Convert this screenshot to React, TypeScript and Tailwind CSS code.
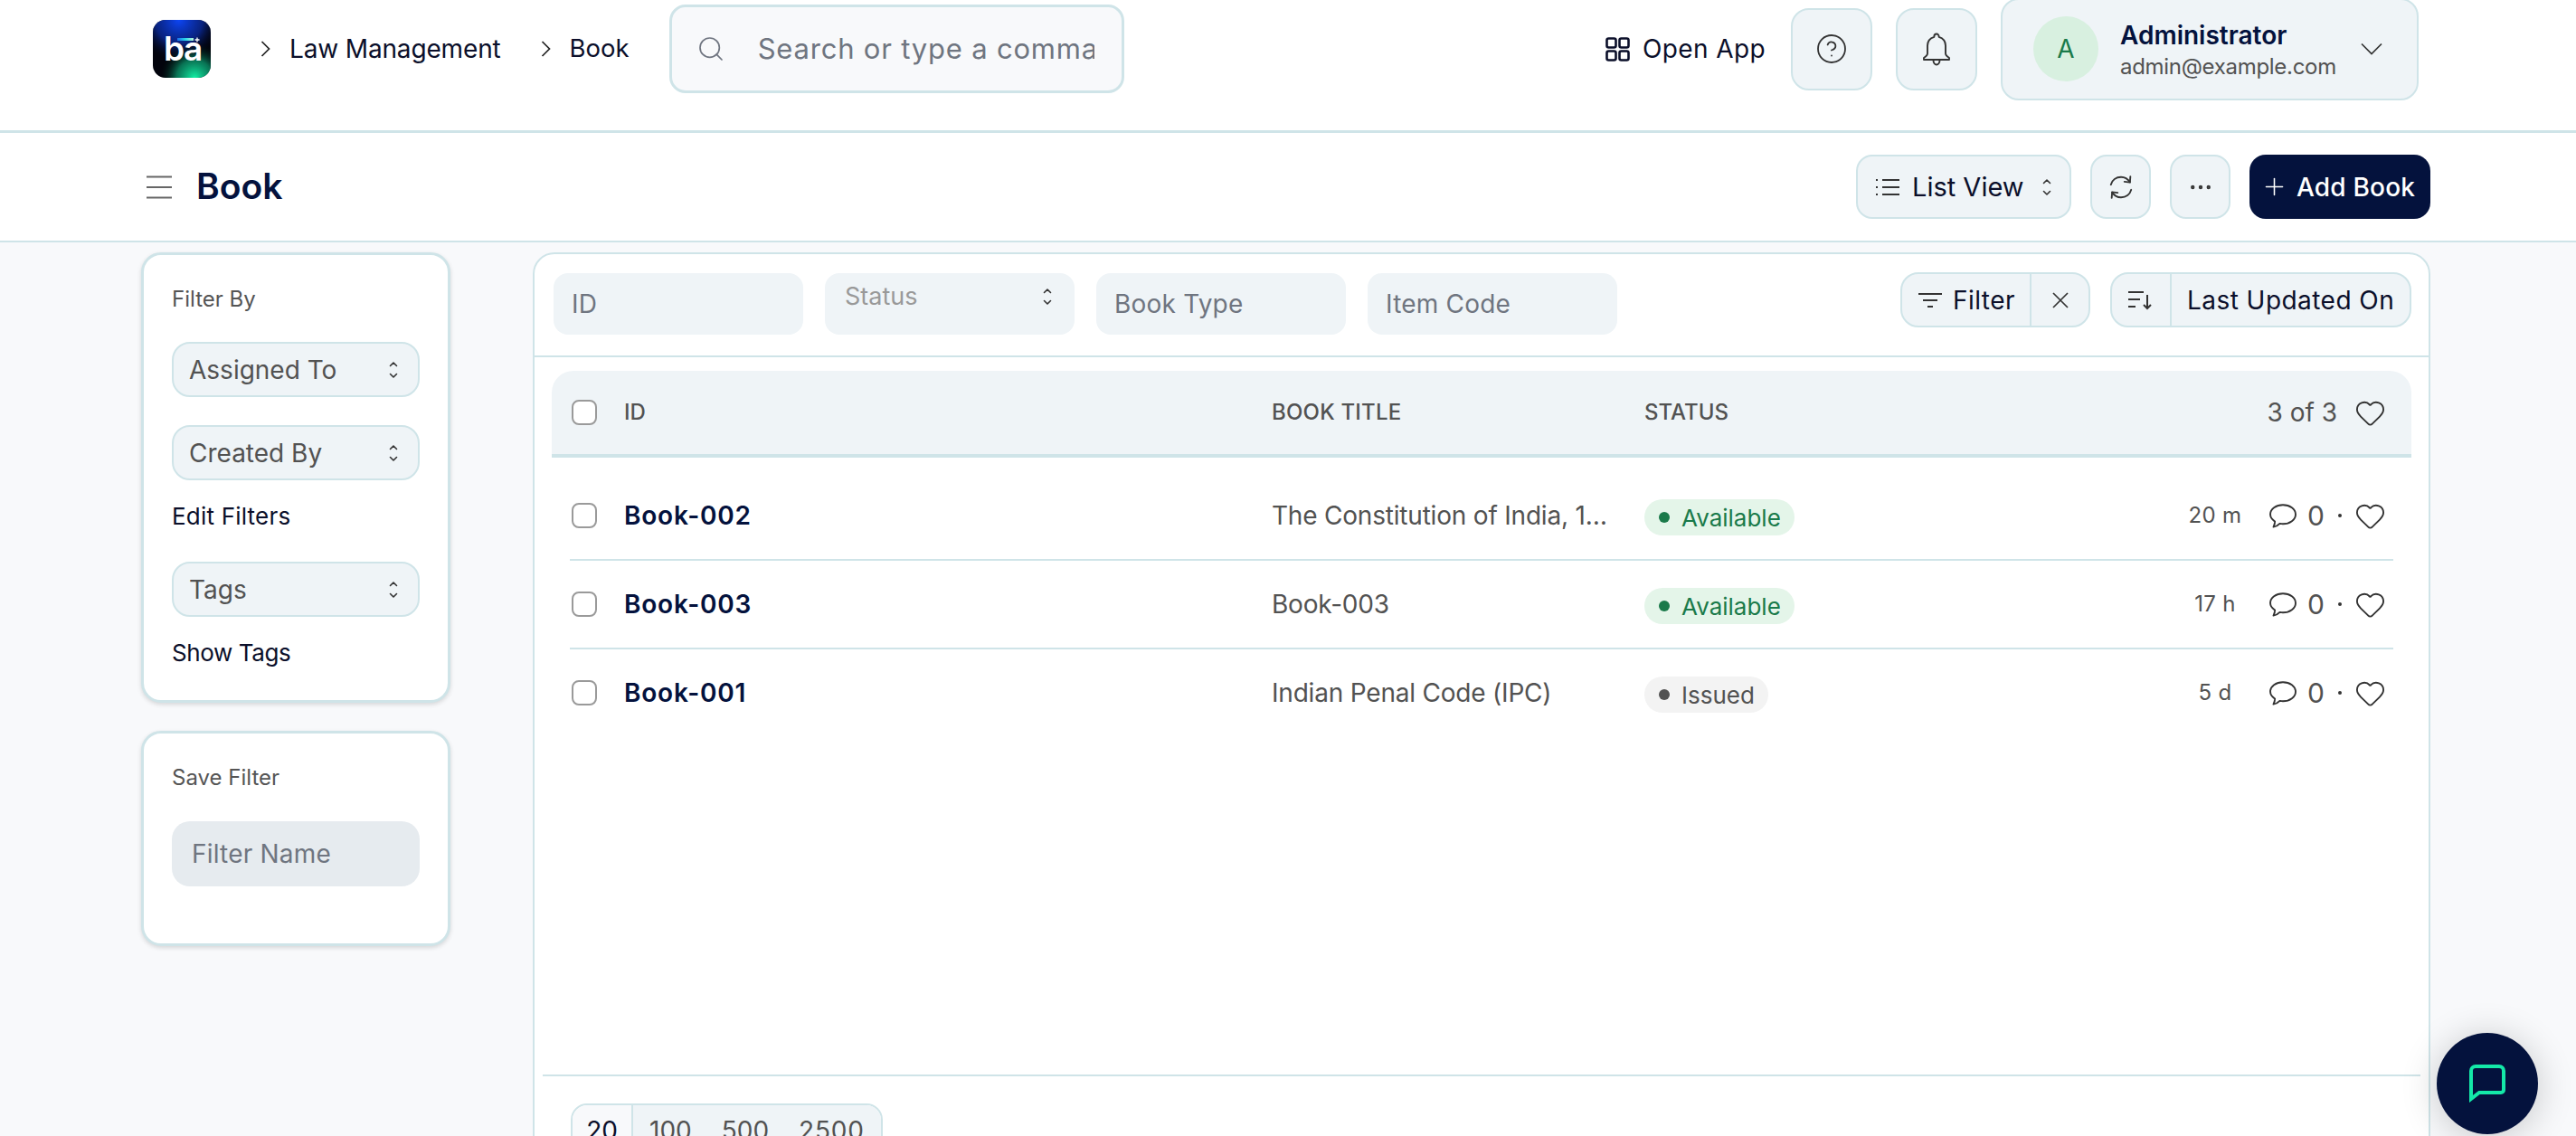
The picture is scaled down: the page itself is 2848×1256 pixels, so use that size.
import React from "react";
import { Search, Heart, CircleHelp, MoreHorizontal, Plus } from "lucide-react";

const UpDown = ({ className = "" }: { className?: string }) => (
  <svg viewBox="0 0 10 20" className={`w-[10px] h-[20px] ${className}`} fill="none" stroke="#333" strokeWidth="1.6" strokeLinecap="round" strokeLinejoin="round">
    <path d="M1.5 5.500 5 2l3.500 3.500" />
    <path d="M1.500 14.500 5 18l3.500-3.500" />
  </svg>
);

const Crumb = ({ className = "" }: { className?: string }) => (
  <svg viewBox="0 0 11 18" className={`w-[11px] h-[18px] ${className}`} fill="none" stroke="#222" strokeWidth="1.700">
    <path d="m1.500 1 8 8-8 8" />
  </svg>
);

const Comment = () => (
  <svg viewBox="0 0 30 27" className="w-[30px] h-[27px]" fill="none" stroke="#333" strokeWidth="1.9" strokeLinejoin="round">
    <path d="M15 1.200C7.300 1.200 1 5.900 1 11.600c0 3.200 2 6 5.100 8 0 2-.5 4-1.600 6 3-.4 5.600-2.200 7-3.700 1.100.2 2.300.4 3.500.4 7.700 0 14-4.700 14-10.600S22.700 1.200 15 1.200Z" />
  </svg>
);

const Logo = () => (
  <svg viewBox="0 0 64 64" className="w-[64px] h-[64px]">
    <defs>
      <radialGradient id="lb" cx="0.45" cy="0" r="0.75">
        <stop offset="0" stopColor="#0d45f5" />
        <stop offset="0.55" stopColor="#0a2a9a" stopOpacity="0.8" />
        <stop offset="1" stopColor="#000" stopOpacity="0" />
      </radialGradient>
      <radialGradient id="lg" cx="0.72" cy="1" r="0.62">
        <stop offset="0" stopColor="#12f0a5" />
        <stop offset="0.5" stopColor="#0a8f66" stopOpacity="0.8" />
        <stop offset="1" stopColor="#000" stopOpacity="0" />
      </radialGradient>
      <linearGradient id="lbar" x1="0" x2="1" y1="0" y2="0">
        <stop offset="0" stopColor="#1a6cf0" />
        <stop offset="0.5" stopColor="#27d8e8" />
        <stop offset="1" stopColor="#b8f5d8" />
      </linearGradient>
    </defs>
    <rect width="64" height="64" rx="14" fill="#02030c" />
    <rect width="64" height="64" rx="14" fill="url(#lb)" />
    <rect width="64" height="64" rx="14" fill="url(#lg)" />
    <rect x="27" y="20" width="18" height="3" fill="url(#lbar)" />
    <path d="M49 19.500v5M46.500 22h5" stroke="#fff" strokeWidth="1.300" />
    <text x="12" y="45" fill="#fff" fontFamily="Inter, sans-serif" fontWeight="600" fontSize="37" letterSpacing="-1.500">ba</text>
  </svg>
);

const Pill = ({ label, green, w }: { label: string; green?: boolean; w: string }) => (
  <div className={`flex items-center mt-[4px] h-[40px] rounded-full pl-[16px] text-[26px] ${w} ${green ? "bg-[#e4f5e9] text-[#1a7a4a]" : "bg-[#f3f3f3] text-[#525252]"}`}>
    <span className={`w-[12px] h-[12px] rounded-full mr-[13px] ${green ? "bg-[#1a7a4a]" : "bg-[#525252]"}`} />
    {label}
  </div>
);

const rows = [
  { id: "Book-002", title: "The Constitution of India, 1949", status: "Available", time: "20 m" },
  { id: "Book-003", title: "Book-003", status: "Available", time: "17 h" },
  { id: "Book-001", title: "Indian Penal Code (IPC)", status: "Issued", time: "5 d" },
];

const Check = () => <span className="block shrink-0 w-[28px] h-[28px] rounded-[8px] border-[2px] border-[#9a9a9a] bg-white" />;

const Select = ({ label }: { label: string }) => (
  <div className="flex items-center justify-between h-[61px] rounded-[20px] border-[2px] border-[#cfe4e8] bg-[#eff4f7] pl-[17px] pr-[22px] text-[28px] text-[#525252]">
    {label}
    <UpDown />
  </div>
);

const FilterInput = ({ label }: { label: string }) => (
  <input placeholder={label} className="w-[276px] h-[68px] rounded-[16px] bg-[#eff4f7] pl-[20px] text-[28px] tracking-[0.2px] outline-none placeholder:text-[#6f7580]" />
);

export default function App() {
  return (
    <div className="w-[2848px] h-[1256px] overflow-hidden bg-[#f8f9fb] text-[#0b0f2a] font-['Inter','Liberation_Sans',sans-serif]">
      <header className="h-[147px] overflow-hidden bg-white border-b-[3px] border-[#cfe4e8] shadow-[0_2px_3px_rgba(0,0,0,0.1)] pl-[169px] pr-[174px]">
        <div className="flex items-center h-[108px]">
          <Logo />
          <Crumb className="ml-[55px]" />
          <span className="ml-[21px] text-[28px] tracking-[-0.15px]">Law Management</span>
          <Crumb className="ml-[44px]" />
          <span className="ml-[21px] text-[27.500px]">Book</span>
          <div className="flex items-center ml-[44px] w-[503px] h-[98px] rounded-[18px] border-[3px] border-[#cfe4e8] bg-[#f8f9fb] pl-[27px] pr-[30px]">
            <Search className="w-[32px] h-[32px] text-[#6f7580] shrink-0" strokeWidth={1.300} />
            <input placeholder="Search or type a command" className="ml-[36px] w-full min-w-0 text-[31px] tracking-[0.800px] outline-none placeholder:text-[#6f7580]" />
          </div>
          <div className="flex items-center ml-auto">
            <svg viewBox="0 0 27 27" className="w-[27px] h-[27px]" fill="none" stroke="#0b0f2a" strokeWidth="2.600">
              <rect x="1.500" y="1.500" width="10" height="10" rx="2" />
              <rect x="15.500" y="1.500" width="10" height="10" rx="2" />
              <rect x="1.500" y="15.500" width="10" height="10" rx="2" />
              <rect x="15.500" y="15.500" width="10" height="10" rx="2" />
            </svg>
            <span className="ml-[14px] text-[28px] tracking-[0.4px]">Open App</span>
            <div className="flex items-center justify-center ml-[28px] w-[90px] h-[91px] rounded-[20px] border-[2px] border-[#cfe4e8] bg-[#eff4f7]">
              <CircleHelp className="w-[36px] h-[36px] text-[#333]" strokeWidth={1.200} />
            </div>
            <div className="flex items-center justify-center ml-[26px] w-[90px] h-[91px] rounded-[20px] border-[2px] border-[#cfe4e8] bg-[#eff4f7]">
              <svg viewBox="0 0 32 37" className="w-[32px] h-[37px]" fill="none" stroke="#333" strokeWidth="1.900" strokeLinejoin="round">
                <path d="M16 1.500c-1.500 0-2.600 1.200-2.600 2.700v.6C8.800 6.200 6 10 6 14.500V23c0 2-1.700 3.500-4 5v2h28v-2c-2.300-1.500-4-3-4-5v-8.500c0-4.500-2.800-8.300-7.400-9.700v-.6C18.600 2.700 17.500 1.500 16 1.500Z" />
                <path d="M12.500 30.500c0 2.500 1.500 5 3.500 5s3.500-2.500 3.500-5" />
              </svg>
            </div>
            <div className="flex items-center ml-[26px] w-[462px] h-[113px] shrink-0 rounded-[20px] border-[2px] border-[#cfe4e8] bg-[#eff4f7] pl-[34px]">
              <div className="flex items-center justify-center w-[72px] h-[72px] rounded-full bg-[#d8f0e0] text-[#1a7a4a] text-[28px]">A</div>
              <div className="ml-[24px] mt-[3px] flex flex-col">
                <span className="text-[28px] leading-[36px] font-semibold text-[#04123d]">Administrator</span>
                <span className="text-[24px] leading-[34px] tracking-[-0.3px] text-[#525252]">admin@example.com</span>
              </div>
              <svg viewBox="0 0 24 14" className="w-[24px] h-[14px] ml-auto mr-[38px]" fill="none" stroke="#333" strokeWidth="1.700">
                <path d="m1 1.500 11 11 11-11" />
              </svg>
            </div>
          </div>
        </div>
      </header>

      <div className="flex items-center h-[121px] bg-white border-b-[2px] border-[#cfe4e8] pl-[162px] pr-[161px]">
        <svg viewBox="0 0 28 26" className="w-[28px] h-[26px]" fill="none" stroke="#666" strokeWidth="2.200">
          <path d="M0 1.500h28M0 13h28M0 24.500h28" />
        </svg>
        <h1 className="ml-[27px] text-[39px] font-semibold text-[#04123d]">Book</h1>
        <div className="flex items-center ml-auto">
          <div className="flex items-center w-[238px] h-[71px] rounded-[18px] border-[2px] border-[#cfe4e8] bg-[#eff4f7] pl-[20px] text-[29px]">
            <svg viewBox="0 0 26 20" className="w-[26px] h-[20px]" fill="none" stroke="#333" strokeWidth="2">
              <path d="M7 2h19M7 10h19M7 18h19" />
              <path d="M0 2h3M0 10h3M0 18h3" strokeDasharray="2 1" />
            </svg>
            <span className="ml-[14px]">List View</span>
            <UpDown className="ml-[20px]" />
          </div>
          <div className="flex items-center justify-center ml-[21px] w-[67px] h-[71px] rounded-[18px] border-[2px] border-[#cfe4e8] bg-[#eff4f7]">
            <svg viewBox="0 0 32 32" className="w-[30px] h-[30px]" fill="none" stroke="#333" strokeWidth="2" strokeLinecap="round" strokeLinejoin="round">
              <path d="M4 13C5.500 7.500 10.300 4 16 4c4.500 0 8 2.200 10.500 6" />
              <path d="M28 19c-1.500 5.500-6.300 9-12 9-4.500 0-8-2.200-10.500-6" />
              <path d="m27 3.500-.5 6.800-6.500-.8" />
              <path d="m5 28.500.5-6.800 6.500.8" />
            </svg>
          </div>
          <div className="flex items-center justify-center ml-[21px] w-[67px] h-[71px] rounded-[18px] border-[2px] border-[#cfe4e8] bg-[#eff4f7]">
            <MoreHorizontal className="w-[30px] h-[30px] text-[#333]" strokeWidth={1.500} />
          </div>
          <div className="flex items-center ml-[21px] w-[200px] h-[71px] rounded-[18px] bg-[#04123d] text-white pl-[12px]">
            <Plus className="w-[31px] h-[31px]" strokeWidth={1.200} />
            <span className="ml-[9px] text-[28px] font-medium tracking-[0.2px]">Add Book</span>
          </div>
        </div>
      </div>

      <div className="flex items-start pl-[156px] pt-[11px]">
        <aside className="w-[342px] shrink-0">
          <div className="h-[498px] rounded-[22px] border-[3px] border-[#cfe4e8] bg-white shadow-[0_2px_5px_rgba(0,0,0,0.14)] px-[31px] pt-[34px]">
            <div className="text-[24px] leading-[30px] text-[#555]">Filter By</div>
            <div className="mt-[32px]"><Select label="Assigned To" /></div>
            <div className="mt-[31px]"><Select label="Created By" /></div>
            <div className="mt-[21px] text-[26px] leading-[38px] tracking-[0.2px]">Edit Filters</div>
            <div className="mt-[31px]"><Select label="Tags" /></div>
            <div className="mt-[21px] text-[26px] leading-[38px] tracking-[-0.4px]">Show Tags</div>
          </div>
          <div className="mt-[31px] h-[238px] rounded-[22px] border-[3px] border-[#cfe4e8] bg-white shadow-[0_2px_5px_rgba(0,0,0,0.14)] px-[31px] pt-[34px]">
            <div className="text-[24px] leading-[30px] text-[#555]">Save Filter</div>
            <input placeholder="Filter Name" className="mt-[33px] w-[274px] h-[72px] rounded-[20px] bg-[#e6ebef] pl-[22px] text-[28px] tracking-[0.2px] outline-none placeholder:text-[#6f7580]" />
          </div>
        </aside>

        <main className="ml-[91px] w-[2098px] h-[1200px] shrink-0 rounded-[24px] border-[2px] border-[#cfe4e8] bg-white">
          <div className="flex items-start h-[114px] border-b-[2px] border-[#cfe4e8] pl-[21px] pr-[19px] pt-[20px]">
            <div className="flex gap-[24px] mt-[1px]">
              <FilterInput label="ID" />
              <div className="flex justify-between w-[276px] h-[68px] rounded-[16px] bg-[#eff4f7] pl-[22px] pr-[25px] pt-[6px] text-[27px] text-[#999]">
                Status
                <UpDown className="mt-[10px]" />
              </div>
              <FilterInput label="Book Type" />
              <FilterInput label="Item Code" />
            </div>
            <div className="flex ml-auto text-[28px] tracking-[0.45px]">
              <div className="flex w-[210px] h-[61px] rounded-[20px] border-[2px] border-[#cfe4e8] bg-[#eff4f7]">
                <div className="flex items-center w-[143px] border-r-[2px] border-[#cfe4e8] pl-[18px]">
                  <svg viewBox="0 0 26 18" className="w-[26px] h-[18px]" fill="none" stroke="#333" strokeWidth="2">
                    <path d="M0 2h26M5 9h16M10 16h6" />
                  </svg>
                  <span className="ml-[12px]">Filter</span>
                </div>
                <div className="flex flex-1 items-center justify-center">
                  <svg viewBox="0 0 18 18" className="w-[18px] h-[18px]" fill="none" stroke="#333" strokeWidth="1.700">
                    <path d="m1 1 16 16M17 1 1 17" />
                  </svg>
                </div>
              </div>
              <div className="flex ml-[22px] w-[333px] h-[61px] rounded-[20px] border-[2px] border-[#cfe4e8] bg-[#eff4f7]">
                <div className="flex items-center w-[66px] border-r-[2px] border-[#cfe4e8] pl-[18px]">
                  <svg viewBox="0 0 27 22" className="w-[27px] h-[22px]" fill="none" stroke="#333" strokeWidth="2">
                    <path d="M0 2h17M0 10h13M0 18h8" />
                    <path d="M21 5v15M17 16l4 4 4-4" />
                  </svg>
                </div>
                <span className="flex items-center pl-[17px]">Last Updated On</span>
              </div>
            </div>
          </div>

          <div className="h-[793px] pt-[15px]">
            <div className="flex items-center mx-[19px] h-[96px] rounded-t-[24px] bg-[#eff4f7] border-b-[4px] border-[#cfe4e8] pl-[22px] pr-[28px] text-[24px] font-medium text-[#525252]">
              <Check />
              <span className="ml-[30px] w-[716px]">ID</span>
              <span className="w-[412px] tracking-[0.2px]">BOOK TITLE</span>
              <span>STATUS</span>
              <span className="ml-auto text-[28px] font-normal">3 of 3</span>
              <Heart className="ml-[19px] w-[35px] h-[35px] text-[#333]" strokeWidth={1.300} />
            </div>
            <div className="mx-[39px] mt-[16px]">
              {rows.map((r, i) => (
                <div key={r.id} className={`flex items-center h-[98px] pl-[2px] pr-[8px] border-b-[2px] ${i < 2 ? "border-[#cfe4e8]" : "border-transparent"}`}>
                  <Check />
                  <span className="ml-[30px] w-[716px] text-[28px] font-semibold tracking-[0.8px] text-[#04123d]">{r.id}</span>
                  <span className="w-[412px] pr-[32px] truncate text-[28px] tracking-[-0.2px] text-[#525252]">{r.title}</span>
                  <Pill label={r.status} green={r.status === "Available"} w={r.status === "Available" ? "w-[166px]" : "w-[137px]"} />
                  <span className="ml-auto w-[80px] text-center text-[24px] tracking-[0.3px] text-[#525252]">{r.time}</span>
                  <span className="ml-[20px]"><Comment /></span>
                  <span className="ml-[12px] w-[18px] text-[30px] text-[#525252]">0</span>
                  <span className="ml-[16px] w-[4px] h-[4px] rounded-full bg-[#333]" />
                  <Heart className="ml-[14px] w-[35px] h-[35px] text-[#333]" strokeWidth={1.300} />
                </div>
              ))}
            </div>
          </div>

          <div className="mx-[9px] border-t-[2px] border-[#cfe4e8] pt-[30px] pl-[31px]">
            <div className="flex w-[345px] h-[60px] overflow-hidden rounded-t-[18px] border-[2px] border-[#cfe4e8] text-[28px] text-[#525252]">
              <span className="w-[67px] bg-[#f8f9fb] border-r-[2px] border-[#cfe4e8] text-center pt-[7px] text-[#0b0f2a]">20</span>
              <div className="flex-1 flex bg-[#eff4f7] pt-[7px] pl-[18px] gap-[33px]">
                <span>100</span>
                <span>500</span>
                <span className="tracking-[0.8px]">2500</span>
              </div>
            </div>
          </div>
        </main>
      </div>

      <div className="fixed left-[2694px] top-[1142px] flex items-center justify-center w-[112px] h-[112px] rounded-full bg-[#04123d] shadow-[0_4px_40px_rgba(0,0,0,0.2)]">
        <svg viewBox="0 0 40 42" className="w-[40px] h-[42px]" fill="none" stroke="#14e8a8" strokeWidth="4">
          <path d="M2 38V7a5 5 0 0 1 5-5h26a5 5 0 0 1 5 5v21a3 3 0 0 1-3 3H11L2 38Z" />
        </svg>
      </div>
    </div>
  );
}
